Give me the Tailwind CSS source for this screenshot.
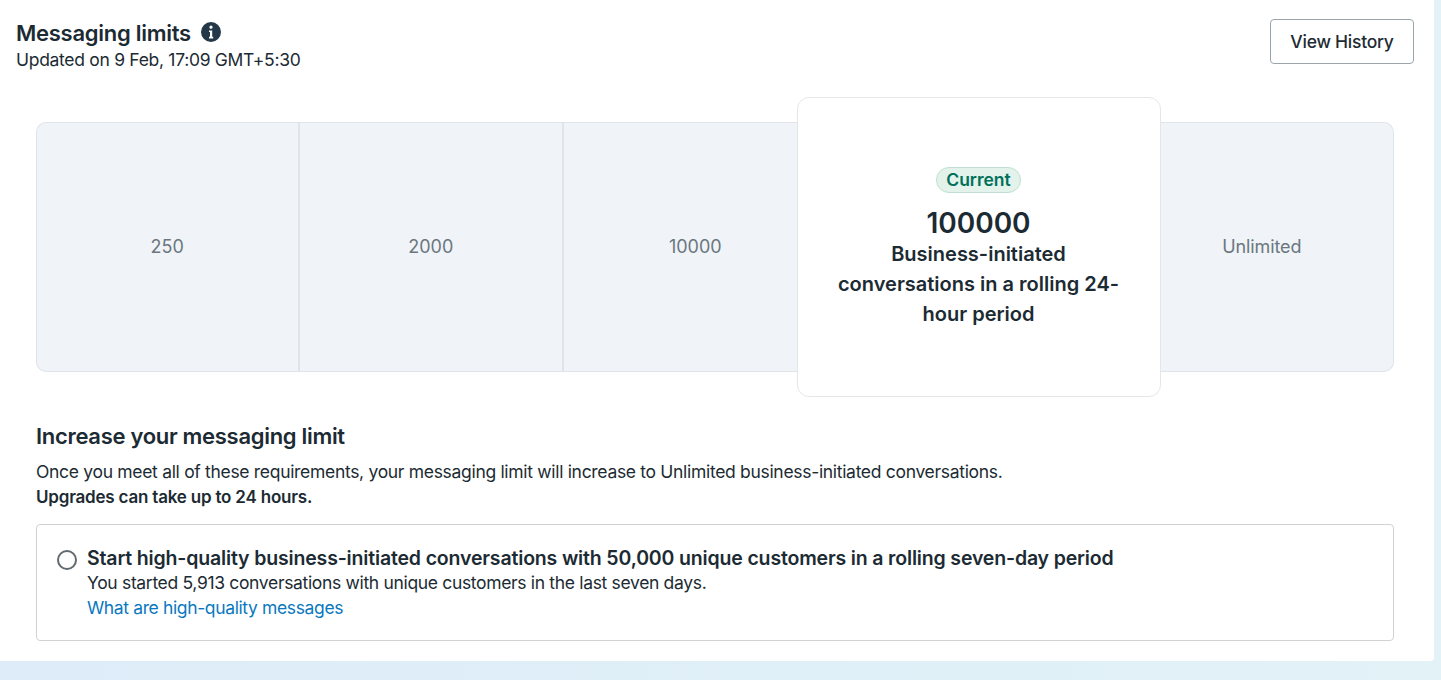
<!DOCTYPE html>
<html lang="en">
<head>
    <meta charset="UTF-8" />
    <title>Messaging limits</title>
    <script src="https://cdn.jsdelivr.net/npm/@tailwindcss/browser@4"></script>
</head>
<body class="h-[680px] w-[1441px] overflow-hidden bg-linear-to-r from-[#ddecf8] to-[#e2f2f7] font-['Inter',sans-serif] text-[#1c2b33]">
    <main class="h-[661px] w-[1434px] rounded-br-[4px] bg-white">
        <header class="flex justify-between pl-4 pr-5 pt-[19px]">
            <div>
                <div class="flex items-center gap-[10px]">
                    <h1 class="text-[22px] leading-[28px] font-semibold tracking-[-0.27px]">Messaging limits</h1>
                    <svg class="mb-[3px] h-5 w-5" viewBox="0 0 20 20" fill="#23394a">
                        <path fill-rule="evenodd" d="M10 0a10 10 0 1 0 0 20 10 10 0 0 0 0-20Zm0 3.6a1.6 1.6 0 1 1 0 3.2 1.6 1.6 0 0 1 0-3.2ZM8 8.4h3.2v6.4h1v1.6H8v-1.6h1v-4.8H8V8.4Z"/>
                    </svg>
                </div>
                <p class="mt-[1px] text-[17.5px] leading-[24px] tracking-[-0.3px]">Updated on 9 Feb, 17:09 GMT+5:30</p>
            </div>
            <button class="h-[45px] w-[144px] rounded-[4px] border border-[#9aa5ab] bg-white pt-[1px] text-[17.5px] font-medium tracking-[-0.25px]">View History</button>
        </header>

        <section class="mx-9 mt-[25px] flex h-[300px] w-[1358px] items-center">
            <div class="flex h-[250px] w-[262px] items-center justify-center rounded-l-[10px] border border-r-0 border-[#dfe4ea] bg-[#f0f3f8] pb-[2px] text-[18px] text-[#6b777e]">250</div>
            <div class="flex h-[250px] w-[265px] items-center justify-center border-y border-l-2 border-[#dfe4ea] bg-[#f0f3f8] pb-[2px] text-[18px] text-[#6b777e]">2000</div>
            <div class="flex h-[250px] w-[265px] items-center justify-center border-y border-l-2 border-[#dfe4ea] bg-[#f0f3f8] pb-[2px] text-[18px] text-[#6b777e]">10000</div>
            <div class="relative z-10 -mx-[30px] flex h-[300px] w-[364px] shrink-0 flex-col items-center rounded-[12px] border border-[#e4e7ea] bg-white pt-[69px]">
                <span class="flex h-[26px] w-[85px] items-center justify-center rounded-full border border-[#bfe0d0] bg-[#e3f2ea] text-[17.5px] font-semibold text-[#00705a]">Current</span>
                <div class="mt-[12px] text-[28px] leading-[36px] font-semibold">100000</div>
                <p class="-mt-[2px] w-[300px] text-center text-[20px] leading-[30px] font-semibold">Business-initiated conversations in a rolling 24-hour period</p>
            </div>
            <div class="flex h-[250px] w-[264px] items-center justify-center rounded-r-[10px] border border-l-0 border-[#dfe4ea] bg-[#f0f3f8] pb-[2px] text-[18px] tracking-[-0.1px] text-[#6b777e]">Unlimited</div>
        </section>

        <section class="mx-9 mt-[23px] w-[1358px]">
            <h2 class="text-[22px] leading-[32px] font-semibold tracking-[-0.3px]">Increase your messaging limit</h2>
            <p class="mt-[7px] text-[17.5px] leading-[25px] tracking-[-0.31px]">Once you meet all of these requirements, your messaging limit will increase to Unlimited business-initiated conversations.</p>
            <p class="mt-[1px] text-[17px] leading-[25px] font-semibold tracking-[-0.2px]">Upgrades can take up to 24 hours.</p>
            <div class="mt-[14px] flex h-[117px] gap-[10px] rounded-[4px] border border-[#cfd3d6] pl-5 pt-[20px]">
                <span class="mt-[5px] h-5 w-5 shrink-0 rounded-full border-2 border-[#606a70]"></span>
                <div>
                    <p class="pt-[2px] text-[19.5px] leading-[23px] font-semibold tracking-[-0.16px]">Start high-quality business-initiated conversations with 50,000 unique customers in a rolling seven-day period</p>
                    <p class="text-[17.5px] leading-[25px] tracking-[-0.33px]">You started 5,913 conversations with unique customers in the last seven days.</p>
                    <a href="#" class="block text-[17.5px] leading-[25px] tracking-[-0.37px] text-[#0a78be]">What are high-quality messages</a>
                </div>
            </div>
        </section>
    </main>
</body>
</html>
